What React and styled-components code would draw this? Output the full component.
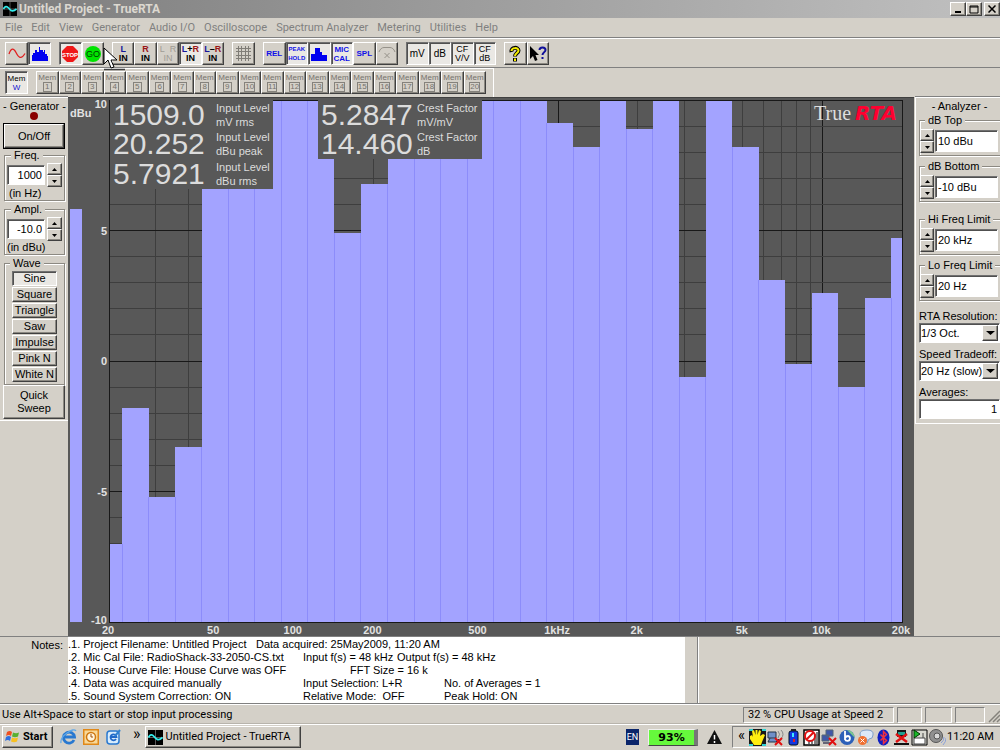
import React from "react";
import styled, { createGlobalStyle, css } from "styled-components";

const face = "#d4d0c8";
const uiFont = `Roboto, "DejaVu Sans Condensed", sans-serif`;

const raised = css`
  border: 1px solid;
  border-color: #fff #404040 #404040 #fff;
  box-shadow: inset -1px -1px 0 #8c8982;
`;
const sunken = css`
  border: 1px solid;
  border-color: #707070 #fff #fff #707070;
  box-shadow: inset 1px 1px 0 #505050;
`;

const GlobalStyle = createGlobalStyle`
  * { box-sizing: border-box; }
  body {
    margin: 0;
    background: ${face};
    font-family: "Liberation Sans", Arial, sans-serif;
    font-size: 11px;
    line-height: 13px;
    color: #000;
  }
  button, input, select { font: inherit; color: inherit; border-radius: 0; margin: 0; }
`;

const Window = styled.div`
  position: relative;
  display: flex;
  flex-direction: column;
  min-height: 100vh;
  overflow: hidden;
`;

const TitleBar = styled.header`
  display: flex;
  align-items: center;
  height: 18px;
  padding: 0 0 0 3px;
  gap: 2px;
  background: linear-gradient(90deg, #7d7d7d, #c0c0c0);
  h1 {
    flex: 1;
    margin: 0;
    font: bold 12px/16px ${uiFont};
    color: #dcd8d0;
  }
`;

const CaptionButton = styled.button`
  ${raised}
  width: 16px;
  height: 14px;
  padding: 0;
  background: ${face};
  display: flex;
  justify-content: center;
  align-items: center;
  margin-left: ${(p) => (p.$apart ? "0" : "-2px")};
`;

const MenuBar = styled.nav`
  display: flex;
  gap: 9px;
  height: 20px;
  padding: 0 5px;
  border-bottom: 1px solid #808080;
  button {
    padding: 0;
    border: 0;
    background: none;
    font: 11px/18px ${uiFont};
    color: #808080;
  }
`;

const ToolBar = styled.div`
  display: flex;
  gap: 8px;
  height: 30px;
  padding: 3px 5px;
  border-top: 1px solid #fff;
  border-bottom: 1px solid #808080;
`;

const MemBar = styled(ToolBar)`
  width: 494px;
  height: 29px;
  padding: 2px 5px 3px;
  border-bottom: 0;
  border-right: 1px solid #fff;
`;

const Group = styled.div`
  display: grid;
  grid-auto-flow: column;
  grid-auto-columns: 1fr;
  width: ${(p) => p.$w}px;
`;

const ToolButton = styled.button`
  ${(p) => (p.$on ? sunken : raised)}
  min-width: 0;
  height: 23px;
  padding: 0;
  background: ${(p) => (p.$on ? "#eae8e4" : face)};
  color: ${(p) => p.$ink || "#000"};
  display: flex;
  flex-direction: column;
  align-items: center;
  justify-content: center;
  font-size: ${(p) => p.$size || 9}px;
  font-weight: ${(p) => (p.$light ? 400 : 700)};
  line-height: 9px;
  white-space: nowrap;
`;

const Ink = styled.span`
  color: ${(p) => p.$c};
`;

const MemButton = styled(ToolButton)`
  font: 8px/9px "Liberation Sans", sans-serif;
  color: #75726c;
  b {
    min-width: 9px;
    border: 1px solid #85827c;
    font: 8px/8px "Liberation Sans", sans-serif;
    text-align: center;
  }
`;

const Main = styled.main`
  display: grid;
  grid-template-columns: 68px minmax(0, 1fr) 86px;
`;

const SidePanel = styled.aside`
  display: flex;
  flex-direction: column;
  align-items: stretch;
  align-self: start;
  padding: ${(p) => (p.$right ? "2px 0 4px 3px" : "2px 3px 1px 3px")};
  border-top: 1px solid #fff;
  border-bottom: 1px solid #fff;
  box-shadow: 0 -1px 0 #808080;
  ${(p) => p.$right && "border-left: 1px solid #fff; margin-left: 1px;"}
`;

const PanelTitle = styled.h2`
  margin: 0;
  font-size: 11px;
  font-weight: 400;
  line-height: 12px;
  text-align: center;
  white-space: nowrap;
`;

const Lamp = styled.span`
  width: 8px;
  height: 8px;
  margin: 0 auto 3px;
  border-radius: 50%;
  background: #8a0000;
`;

const PushButton = styled.button`
  ${(p) => (p.$on ? sunken : raised)}
  padding: 0;
  height: ${(p) => p.$h}px;
  background: ${(p) => (p.$on ? "#eae8e4" : face)};
  line-height: 13px;
  ${(p) => p.$main && "outline: 1px solid #000; outline-offset: 0; margin: 1px 1px 1px;"}
`;

const Box = styled.fieldset`
  min-width: 0;
  margin: ${(p) => p.$mt || 0}px 0 0 ${(p) => (p.$right ? 0 : 1)}px;
  padding: ${(p) => p.$pad || "2px 2px 1px"};
  border: 1px solid #8c8982;
  ${(p) => p.$right && "border-right: 0;"}
  box-shadow: 1px 1px 0 #fff, inset 1px 1px 0 #fff;
  legend {
    margin-left: ${(p) => (p.$right ? 5 : 4)}px;
    padding: 0 3px;
    line-height: 12px;
    height: 12px;
    background: ${face};
  }
  small {
    display: block;
    font-size: 11px;
    line-height: 12px;
    padding-left: ${(p) => p.$unit || 0}px;
  }
`;

const SpinRow = styled.div`
  display: flex;
  align-items: center;
  gap: ${(p) => (p.$right ? 1 : 2)}px;
  height: 24px;
`;

const Field = styled.input`
  ${sunken}
  flex: ${(p) => (p.$solo ? "none" : 1)};
  min-width: 0;
  width: 100%;
  height: ${(p) => p.$h || 20}px;
  padding: 0 2px;
  background: #fff;
  text-align: ${(p) => p.$align || "left"};
  outline: none;
`;

const Arrows = styled.span`
  display: flex;
  flex-direction: column;
  width: ${(p) => p.$w || 15}px;
  button {
    ${raised}
    height: 12px;
    padding: 0;
    background: ${face};
    display: flex;
    align-items: center;
    justify-content: center;
  }
`;

const WaveList = styled.div`
  display: flex;
  flex-direction: column;
  gap: 1px;
  padding: 0 6px;
`;

const Labelled = styled.label`
  display: flex;
  flex-direction: column;
  margin-top: ${(p) => p.$mt || 5}px;
  line-height: 13px;
  white-space: nowrap;
`;

const SelectBox = styled.span`
  ${sunken}
  display: grid;
  grid-template-columns: 1fr 16px;
  height: 20px;
  padding: 1px;
  background: #fff;
  select {
    grid-area: 1 / 1 / 2 / 3;
    appearance: none;
    min-width: 0;
    padding: 0;
    border: 0;
    background: none;
    outline: none;
  }
  i {
    ${raised}
    grid-area: 1 / 2;
    display: flex;
    align-items: center;
    justify-content: center;
    background: ${face};
    pointer-events: none;
  }
`;

const ChartArea = styled.section`
  position: relative;
  background: #585858;
  border-top: 1px solid #404040;
  svg {
    display: block;
    width: 100%;
    height: auto;
  }
`;

// readouts float over the plot
const Readout = styled.div`
  position: absolute;
  top: 2px;
  left: ${(p) => p.$x}px;
  width: ${(p) => p.$w}px;
  padding: 0 0 0 3px;
  background: #585858;
  color: #dcdcdc;
`;

const Reading = styled.div`
  display: flex;
  align-items: center;
  height: ${(p) => p.$h}px;
  white-space: nowrap;
  strong {
    flex: none;
    width: ${(p) => p.$col}px;
    font-size: 30px;
    line-height: 28px;
    font-weight: 400;
  }
  span {
    font-size: 11px;
    line-height: 14px;
  }
`;

const Notes = styled.section`
  display: flex;
  height: 68px;
  border-top: 1px solid #808080;
  border-bottom: 1px solid #808080;
  > h3 {
    width: 68px;
    margin: 0;
    padding: 2px 5px 0 0;
    font-size: 11px;
    font-weight: 400;
    text-align: right;
  }
  > hr {
    width: 2px;
    margin: 0 0 0 12px;
    border: 0;
    border-left: 1px solid #808080;
    border-right: 1px solid #fff;
  }
`;

const NotesText = styled.div`
  width: 617px;
  padding: 1px 0 0;
  background: #fff;
  p {
    display: flex;
    margin: 0;
    line-height: 13px;
    white-space: pre;
  }
`;

const NoteCell = styled.span`
  flex: 0 0 ${(p) => p.$w}px;
`;

const StatusBar = styled.footer`
  display: flex;
  align-items: center;
  gap: 3px;
  height: 20px;
  padding: 0 0 0 2px;
  border-top: 1px solid #fff;
  font: 11px/14px ${uiFont};
  p {
    flex: 1;
    margin: 0;
  }
`;

const StatusCell = styled.span`
  width: ${(p) => p.$w}px;
  height: 16px;
  padding-left: 4px;
  border: 1px solid;
  border-color: #808080 #fff #fff #808080;
  line-height: 14px;
  white-space: nowrap;
`;

const TaskBar = styled.div`
  display: flex;
  align-items: center;
  height: 25px;
  padding-left: 2px;
  border-top: 1px solid #fff;
  box-shadow: 0 -1px 0 #b8b4ac;
  font: 11px/14px ${uiFont};
`;

const TaskButton = styled.button`
  ${raised}
  display: flex;
  align-items: center;
  gap: 3px;
  width: ${(p) => p.$w}px;
  height: 22px;
  padding: 0 2px;
  background: ${face};
  font-weight: ${(p) => (p.$bold ? 700 : 400)};
  white-space: nowrap;
`;

const QuickLaunch = styled.div`
  display: flex;
  align-items: center;
  gap: 6px;
  padding: 0 3px 0 7px;
  span {
    font-size: 16px;
    line-height: 12px;
    height: 18px;
    padding: 0 1px 0 5px;
  }
`;

const Indicators = styled.div`
  display: flex;
  align-items: center;
  gap: 9px;
  margin-left: auto;
  margin-right: 10px;
`;

const Language = styled.span`
  width: 13px;
  height: 16px;
  background: #0a246a;
  color: #fff;
  font-size: 9px;
  line-height: 16px;
  text-align: center;
`;

const Battery = styled.span`
  width: 50px;
  height: 17px;
  border: 1px solid #eee;
  border-bottom-color: #444;
  border-right: 4px solid #777;
  background: #66f83c;
  font: bold 11px/15px "DejaVu Sans", sans-serif;
  text-align: center;
`;

const Tray = styled.div`
  display: flex;
  align-items: center;
  gap: 1px;
  width: 268px;
  height: 22px;
  padding: 0 7px 0 5px;
  border: 1px solid;
  border-color: #808080 #fff #fff #808080;
  border-right: 0;
  svg { flex: none; }
  time { margin-left: auto; white-space: nowrap; }
  span { font-size: 15px; line-height: 12px; height: 16px; margin-right: 3px; }
`;

// pointer drawn above the toolbars
const Pointer = styled.svg`
  position: absolute;
  left: 103px;
  top: 47px;
  pointer-events: none;
`;

const menus = ["File", "Edit", "View", "Generator", "Audio I/O", "Oscilloscope", "Spectrum Analyzer", "Metering", "Utilities", "Help"];
const waves = ["Sine", "Square", "Triangle", "Saw", "Impulse", "Pink N", "White N"];

const AppIcon = ({ size = 15 }) => (
  <svg width={size} height={size} viewBox="0 0 15 15">
    <rect width="15" height="15" fill="#000" />
    <path d="M7.5 0v15M0 7.5h15" stroke="#707070" strokeWidth="0.8" />
    <path d="M0.5 7.5C2 4.500 4 4 6 6.500S10 11.500 14.500 7.500" fill="none" stroke="#3ee" strokeWidth="1.8" />
  </svg>
);

const Tri = ({ up, w = 5 }) => (
  <svg width={w} height={w === 5 ? 3 : 4} viewBox="0 0 6 3" preserveAspectRatio="none">
    <path d={up ? "M0 3L3 0L6 3Z" : "M0 0L3 3L6 0Z"} />
  </svg>
);

function Spin({ label, w }) {
  return (
    <Arrows $w={w}>
      <button aria-label={`${label} up`}><Tri up /></button>
      <button aria-label={`${label} down`}><Tri /></button>
    </Arrows>
  );
}

function Tools() {
  return (
    <ToolBar>
      <Group $w={46}>
        <ToolButton aria-label="Oscilloscope">
          <svg width="18" height="16" viewBox="0 0 18 16">
            <path d="M1 8C3 2 5.500 1.500 8 6.500S13 14 17 7.500" fill="none" stroke="#e02020" strokeWidth="1.300" />
          </svg>
        </ToolButton>
        <ToolButton $on aria-label="Spectrum">
          <svg width="18" height="16" viewBox="0 0 18 16">
            <path d="M1 15V9h1V7h2V4h2v2h2V1h1v3h3v2h1V4h1v4h2v2h1v5Z" fill="#0000f0" />
          </svg>
        </ToolButton>
      </Group>
      <Group $w={45}>
        <ToolButton $on aria-label="Stop">
          <svg width="18" height="18" viewBox="0 0 18 18">
            <path d="M6 1h6l5 5v6l-5 5H6l-5-5V6Z" fill="#f01818" />
            <text x="9" y="12" fill="#fff" fontSize="6" fontWeight="700" textAnchor="middle">STOP</text>
          </svg>
        </ToolButton>
        <ToolButton aria-label="Go">
          <svg width="18" height="18" viewBox="0 0 18 18">
            <circle cx="9" cy="9" r="8" fill="#00e400" />
            <text x="9" y="12" fill="#003c00" fontSize="9" fontWeight="400" textAnchor="middle">GO</text>
          </svg>
        </ToolButton>
      </Group>
      <Group $w={112}>
        <ToolButton><Ink $c="#16169a">L</Ink><span>IN</span></ToolButton>
        <ToolButton><Ink $c="#9a1616">R</Ink><span>IN</span></ToolButton>
        <ToolButton $ink="#a09c94" $light><span>L&nbsp;&nbsp;R</span><span>IN</span></ToolButton>
        <ToolButton $on><span><Ink $c="#16169a">L</Ink>+<Ink $c="#9a1616">R</Ink></span><span>IN</span></ToolButton>
        <ToolButton><span><Ink $c="#16169a">L</Ink>–<Ink $c="#9a1616">R</Ink></span><span>IN</span></ToolButton>
      </Group>
      <Group $w={23}>
        <ToolButton aria-label="Grid">
          <svg width="17" height="17" viewBox="0 0 17 17">
            <path d="M3.500 1v15M6.500 1v15M10.500 1v15M13.500 1v15M1 3.500h15M1 6.500h15M1 10.500h15M1 13.500h15" stroke="#807d77" />
          </svg>
        </ToolButton>
      </Group>
      <Group $w={135}>
        <ToolButton $ink="#1010e8" $size={8}>REL</ToolButton>
        <ToolButton $on $ink="#1010e8" $size={6}><span>PEAK</span><span>HOLD</span></ToolButton>
        <ToolButton $on aria-label="Bars">
          <svg width="18" height="16" viewBox="0 0 18 16">
            <path d="M1 15V8h4V2h5v4h2v3h5v6Z" fill="#0000f0" />
          </svg>
        </ToolButton>
        <ToolButton $on $ink="#1010e8" $size={8}><span>MIC</span><span>CAL</span></ToolButton>
        <ToolButton $ink="#1010e8" $size={8}>SPL</ToolButton>
        <ToolButton aria-label="Clear curve">
          <svg width="18" height="16" viewBox="0 0 18 16" fill="none" stroke="#96928a">
            <path d="M1 6C2 3 4 1.500 6 1.500h6c2 0 4 1.500 5 4.500M6.500 7l5 5M11.500 7l-5 5" />
          </svg>
        </ToolButton>
      </Group>
      <Group $w={90}>
        <ToolButton $on $light $size={10}>mV</ToolButton>
        <ToolButton $on $light $size={10}>dB</ToolButton>
        <ToolButton $on $light><span>CF</span><span>V/V</span></ToolButton>
        <ToolButton $on $light><span>CF</span><span>dB</span></ToolButton>
      </Group>
      <Group $w={45}>
        <ToolButton aria-label="Help">
          <svg width="14" height="18" viewBox="0 0 14 18">
            <g fill="none" strokeLinejoin="round">
              <path d="M3.500 7C2.500 2 10.500 1.500 10.500 5.500C10.500 8 7 8 7 11.500M7 13v3.500" stroke="#000" strokeWidth="4" />
              <path d="M3.500 6C3.500 2.500 10.500 2 10.500 5.500C10.500 8 7 8 7 11M7 13.500v2.500" stroke="#f4ec00" strokeWidth="2" />
            </g>
          </svg>
        </ToolButton>
        <ToolButton aria-label="Context help">
          <svg width="18" height="18" viewBox="0 0 18 18">
            <path d="M1 1v13l3-3 2 5 2.500-1-2-5H10Z" fill="#000" />
            <path d="M10.500 5C10.500 1.500 16.500 1.500 16.500 5C16.500 7.500 13.500 7 13.500 10M13.500 12v2" fill="none" stroke="#10109a" strokeWidth="2" />
          </svg>
        </ToolButton>
      </Group>
    </ToolBar>
  );
}

const X0 = 41;
const X1 = 834;
const Y0 = 2;
const Y1 = 524;
const fx = (f) => X0 + (Math.log10(f / 20) / 3) * (X1 - X0);
const dy = (db) => Y0 + ((10 - db) / 20) * (Y1 - Y0);

// third octave bands, level in dBu
const levels = [
  -7, -1.8, -5.2, -3.3, 10, 10, 10, 10, 10, 4.9, 6.8, 10, 10, 10, 10, 10, 10, 9.1, 8.2, 10, 8.9,
  10, -0.6, 10, 8.2, 3.1, -0.1, 2.6, -1, 2.4, 4.7,
];
const bandEdge = (i) => Math.min(X1, Math.max(X0, fx(20 * 2 ** ((i - 0.5) / 3))));
const decade = [2, 3, 4, 5, 6, 7, 8, 9, 10];
const gridFreqs = [...decade.slice(1).map((n) => n * 10), ...decade.map((n) => n * 100), ...decade.map((n) => n * 1000)];
const xLabels = [[20, "20"], [50, "50"], [100, "100"], [200, "200"], [500, "500"], [1000, "1kHz"], [2000, "2k"], [5000, "5k"], [10000, "10k"], [20000, "20k"]];

function Chart() {
  return (
    <svg viewBox="0 0 846 538" fontFamily="Liberation Sans, sans-serif">
      <g shapeRendering="crispEdges">
        {gridFreqs.map((f) => (
          <line key={f} x1={fx(f)} x2={fx(f)} y1={Y0} y2={Y1} stroke={[100, 1000, 10000].includes(f) ? "#181818" : "#3e3e3e"} />
        ))}
        {Array.from({ length: 19 }, (_, i) => 9 - i).map((d) => (
          <line key={d} x1={X0} x2={X1} y1={dy(d)} y2={dy(d)} stroke={d % 5 ? "#3e3e3e" : "#181818"} />
        ))}
        {levels.map((l, i) => (
          <g key={i}>
            <rect x={bandEdge(i)} y={dy(l)} width={bandEdge(i + 1) - bandEdge(i)} height={Y1 - dy(l)} fill="#a3a3ff" />
            {i > 0 && <line x1={bandEdge(i)} x2={bandEdge(i)} y1={dy(Math.min(l, levels[i - 1]))} y2={Y1} stroke="#8c8cfa" />}
          </g>
        ))}
        <rect x={X0} y={Y0} width={X1 - X0} height={Y1 - Y0} fill="none" stroke="#181818" />
        <rect x="2" y="111" width="12" height={Y1 - 111} fill="#a3a3ff" />
      </g>
      <g fill="#e2e2e2" fontSize="11" fontWeight="700">
        <text x="2" y="19">dBu</text>
        {[10, 5, 0, -5, -10].map((d) => (
          <text key={d} x="39" y={dy(d) + (d === 10 ? 8 : d === -10 ? 2 : 4)} textAnchor="end">{d}</text>
        ))}
        {xLabels.map(([f, t]) => (
          <text key={t} x={fx(f) - 1} y="536" textAnchor="middle">{t}</text>
        ))}
      </g>
      <text x="746" y="22" fill="#dedede" fontSize="20" fontFamily="Liberation Serif, serif">True</text>
      <text x="787" y="22" fill="#ff0030" fontSize="20" fontWeight="700" fontStyle="italic" fontFamily="DejaVu Sans, sans-serif">RTA</text>
    </svg>
  );
}

function Generator() {
  return (
    <SidePanel>
      <PanelTitle>- Generator -</PanelTitle>
      <Lamp />
      <PushButton $h={24} $main>On/Off</PushButton>
      <Box $unit={2}>
        <legend>Freq.</legend>
        <SpinRow>
          <Field aria-label="Frequency in Hz" $align="right" defaultValue="1000" />
          <Spin label="Frequency" />
        </SpinRow>
        <small>(in Hz)</small>
      </Box>
      <Box $mt={2}>
        <legend>Ampl.</legend>
        <SpinRow>
          <Field aria-label="Amplitude in dBu" $align="right" defaultValue="-10.0" />
          <Spin label="Amplitude" />
        </SpinRow>
        <small>(in dBu)</small>
      </Box>
      <Box $mt={2} $pad="2px 1px 2px">
        <legend>Wave</legend>
        <WaveList>
          {waves.map((w, i) => <PushButton key={w} $h={15} $on={i === 0}>{w}</PushButton>)}
        </WaveList>
      </Box>
      <PushButton $h={34}>Quick<br />Sweep</PushButton>
    </SidePanel>
  );
}

function Limit({ name, value, mt }) {
  return (
    <Box $right $mt={mt} $pad="3px 2px 2px 0">
      <legend>{name}</legend>
      <SpinRow $right>
        <Spin label={name} w={14} />
        <Field $h={22} aria-label={name} defaultValue={value} />
      </SpinRow>
    </Box>
  );
}

function Analyzer() {
  return (
    <SidePanel $right>
      <PanelTitle>- Analyzer -</PanelTitle>
      <Limit name="dB Top" value="10 dBu" mt={2} />
      <Limit name="dB Bottom" value="-10 dBu" mt={4} />
      <Limit name="Hi Freq Limit" value="20 kHz" mt={11} />
      <Limit name="Lo Freq Limit" value="20 Hz" mt={4} />
      <Labelled $mt={9}>
        RTA Resolution:
        <SelectBox><select defaultValue="a"><option value="a">1/3 Oct.</option></select><i><Tri w={9} /></i></SelectBox>
      </Labelled>
      <Labelled>
        Speed Tradeoff:
        <SelectBox><select defaultValue="a"><option value="a">20 Hz (slow)</option></select><i><Tri w={9} /></i></SelectBox>
      </Labelled>
      <Labelled>
        Averages:
        <Field $solo $align="right" defaultValue="1" />
      </Labelled>
    </SidePanel>
  );
}

const notes = [
  [[188, ".1. Project Filename: Untitled Project"], [240, "Data acquired: 25May2009, 11:20 AM"]],
  [[235, ".2. Mic Cal File: RadioShack-33-2050-CS.txt"], [94, "Input f(s) = 48 kHz"], [120, "Output f(s) = 48 kHz"]],
  [[282, ".3. House Curve File: House Curve was OFF"], [100, "FFT Size = 16 k"]],
  [[235, ".4. Data was acquired manually"], [141, "Input Selection: L+R"], [120, "No. of Averages = 1"]],
  [[235, ".5. Sound System Correction: ON"], [141, "Relative Mode:  OFF"], [120, "Peak Hold: ON"]],
];

function TrayIcons() {
  return (
    <>
      <svg width="17" height="17" viewBox="0 0 17 17">
        <path d="M0 0h17v17H0Z" fill="#181818" />
        <path d="M0 1h4M13 1h4M0 16h4M13 16h4" stroke="#30d0d0" strokeWidth="2" />
        <path d="M5 16L1 10V7l2-1 1 2-1-6 2-1 1.500 5V1h2v5L10 1l2 1-1 5 3-2 2 1-3 7-1 3Z" fill="#ffee10" />
      </svg>
      <svg width="17" height="17" viewBox="0 0 17 17">
        <path d="M1 3h8v6H1ZM3 9l-2 4h8l3-3" fill="#6f8fc8" stroke="#234" />
        <path d="M11 2q3 3 0 7M14 1q4 4 0 9" fill="none" stroke="#888" />
        <path d="M8 9l7 7M15 9l-7 7" stroke="#e01010" strokeWidth="2" />
      </svg>
      <svg width="17" height="17" viewBox="0 0 17 17">
        <rect x="4" y="2" width="9" height="14" rx="2" fill="#1438e0" stroke="#012" />
        <path d="M6 1h5" stroke="#222" strokeWidth="2" />
        <path d="M8 4v4" stroke="#40e8ff" strokeWidth="2" /><path d="M9 10v3" stroke="#e02020" strokeWidth="2" />
      </svg>
      <svg width="17" height="17" viewBox="0 0 17 17">
        <path d="M1 1h15v15H1Z" fill="#fff" stroke="#000" strokeWidth="1.500" />
        <path d="M12 5v10M14 3v12M9 11v4M6 12v3" stroke="#000" />
        <circle cx="7" cy="7" r="5" fill="#fff" stroke="#e01010" strokeWidth="2" /><path d="M3.500 10.500l7-7" stroke="#e01010" strokeWidth="2" />
      </svg>
      <svg width="17" height="17" viewBox="0 0 17 17">
        <path d="M5 1h7v6H5ZM1 6h7v6H1Z" fill="#4058a8" stroke="#567" />
        <path d="M2 14h8" stroke="#667" strokeWidth="2" />
        <path d="M8 9l7 7M15 9l-7 7" stroke="#e01010" strokeWidth="2" />
      </svg>
      <svg width="17" height="17" viewBox="0 0 17 17">
        <circle cx="8" cy="8.500" r="7.500" fill="#2c60b8" /><path d="M8 1a7.500 7.500 0 0 1 7.500 7.500Z" fill="#7cc88c" />
        <path d="M6 2v9M6 10a2.500 2.500 0 1 0 3-3q-2 0-3 2" fill="none" stroke="#fff" strokeWidth="1.800" />
      </svg>
      <svg width="17" height="17" viewBox="0 0 17 17">
        <path d="M3 5q0-4 7-4t6 5q0 4-4 4l-2 4V10Q3 10 3 5Z" fill="#dce8f8" stroke="#7f9fc8" />
        <circle cx="5.500" cy="11.500" r="4.500" fill="#f07030" /><path d="M3.500 9.500l4 4M7.500 9.500l-4 4" stroke="#fff" />
      </svg>
      <svg width="17" height="17" viewBox="0 0 17 17">
        <ellipse cx="8.500" cy="8.500" rx="6" ry="8" fill="#1020c0" />
        <path d="M5.500 5.500l6 6-3 3v-12l3 3-6 6" fill="none" stroke="#f03040" strokeWidth="1.500" />
      </svg>
      <svg width="17" height="17" viewBox="0 0 17 17">
        <path d="M4 1h9v7H4Z" fill="#181818" /><path d="M5 3h7v3H5Z" fill="#20a090" /><path d="M1 15h15" stroke="#111" strokeWidth="2" />
        <path d="M3 5l11 8M14 5L3 13" stroke="#e01010" strokeWidth="2.500" />
      </svg>
      <svg width="17" height="17" viewBox="0 0 17 17">
        <path d="M1 1h15v15H1Z" fill="#d8d8d0" stroke="#000" /><path d="M3 9h11v6H3ZM12 9V4" fill="#fff" stroke="#444" />
        <path d="M3 1v8l6-4Z" fill="#18b828" stroke="#030" />
      </svg>
      <svg width="17" height="17" viewBox="0 0 17 17">
        <circle cx="7" cy="7" r="6.500" fill="#909090" stroke="#555" /><circle cx="8" cy="7" r="3" fill="#d8d8d8" stroke="#555" />
        <path d="M12 14q3-2 3-6M14 16q3-3 3-7" fill="none" stroke="#8aa0d8" />
      </svg>
    </>
  );
}

export default function App() {
  return (
    <Window>
      <GlobalStyle />
      <TitleBar>
        <AppIcon size={14} />
        <h1>Untitled Project - TrueRTA</h1>
        <CaptionButton aria-label="Minimize"><svg width="8" height="8"><path d="M1 7h6" stroke="#000" strokeWidth="2" /></svg></CaptionButton>
        <CaptionButton aria-label="Maximize"><svg width="10" height="9"><path d="M1 1h8v7H1ZM1 2h8" fill="none" stroke="#000" /></svg></CaptionButton>
        <CaptionButton $apart aria-label="Close"><svg width="8" height="8"><path d="M0.500 0.500l7 7M7.500 0.500l-7 7" stroke="#000" strokeWidth="1.500" /></svg></CaptionButton>
      </TitleBar>
      <MenuBar>
        {menus.map((m) => <button key={m}>{m}</button>)}
      </MenuBar>
      <Tools />
      <MemBar>
        <Group $w={23}>
          <ToolButton $on $light $size={8}><span>Mem</span><Ink $c="#1010d0">W</Ink></ToolButton>
        </Group>
        <Group $w={450}>
          {Array.from({ length: 20 }, (_, i) => (
            <MemButton key={i}><span>Mem</span><b>{i + 1}</b></MemButton>
          ))}
        </Group>
      </MemBar>
      <Main>
        <Generator />
        <ChartArea>
          <Chart />
          <Readout $x={42} $w={163}>
            <Reading $h={29} $col={103}><strong>1509.0</strong><span>Input Level<br />mV rms</span></Reading>
            <Reading $h={30} $col={103}><strong>20.252</strong><span>Input Level<br />dBu peak</span></Reading>
            <Reading $h={30} $col={103}><strong>5.7921</strong><span>Input Level<br />dBu rms</span></Reading>
          </Readout>
          <Readout $x={250} $w={164}>
            <Reading $h={29} $col={96}><strong>5.2847</strong><span>Crest Factor<br />mV/mV</span></Reading>
            <Reading $h={30} $col={96}><strong>14.460</strong><span>Crest Factor<br />dB</span></Reading>
          </Readout>
        </ChartArea>
        <Analyzer />
      </Main>
      <Notes>
        <h3>Notes:</h3>
        <NotesText>
          {notes.map((row, i) => (
            <p key={i}>{row.map(([w, t]) => <NoteCell key={t} $w={w}>{t}</NoteCell>)}</p>
          ))}
        </NotesText>
        <hr />
      </Notes>
      <StatusBar>
        <p>Use Alt+Space to start or stop input processing</p>
        <StatusCell $w={151}>32 % CPU Usage at Speed 2</StatusCell>
        <StatusCell $w={25} />
        <StatusCell $w={27} />
        <StatusCell $w={30} />
        <svg width="12" height="16" viewBox="0 0 12 16">
          <path d="M1 15L12 4M5 15l7-7M9 15l3-3" stroke="#85827c" strokeWidth="1.500" />
        </svg>
      </StatusBar>
      <TaskBar>
        <TaskButton $w={51} $bold>
          <svg width="15" height="14" viewBox="0 0 15 14">
            <path d="M2 2q3-2 5 0l-1 4q-2-2-5 0Z" fill="#f05020" /><path d="M8 2.500q3 1.500 6 0l-1 4q-3 1.500-6 0Z" fill="#58b030" />
            <path d="M1 7q3-2 5 0l-1 4q-2-2-5 0Z" fill="#3070e0" /><path d="M7 7.500q3 1.500 6 0l-1 4q-3 1.500-6 0Z" fill="#f8c020" />
          </svg>
          Start
        </TaskButton>
        <QuickLaunch>
          <svg width="17" height="17" viewBox="0 0 17 17">
            <path d="M14 11a5.500 5.500 0 1 1 .5-3H5" fill="none" stroke="#2878d0" strokeWidth="2.800" />
            <path d="M1 14Q0 9 7 4T16 2" fill="none" stroke="#60a8e8" strokeWidth="1.300" />
          </svg>
          <svg width="16" height="16" viewBox="0 0 16 16">
            <rect x="0.500" y="0.500" width="15" height="15" fill="#f8d898" stroke="#e08818" strokeWidth="2" />
            <circle cx="8" cy="8" r="4.500" fill="#fff4dc" stroke="#d07810" strokeWidth="1.500" /><path d="M8 5v3h2" fill="none" stroke="#a05008" />
          </svg>
          <svg width="17" height="17" viewBox="0 0 17 17">
            <rect x="2" y="2" width="12" height="13" rx="3" fill="#d8ecfc" stroke="#2878d0" strokeWidth="1.500" />
            <path d="M11 10a3 3 0 1 1 .5-2H6" fill="none" stroke="#2068c8" strokeWidth="1.800" /><path d="M10 7l5-6" stroke="#3080d0" strokeWidth="2" />
          </svg>
          <span>»</span>
        </QuickLaunch>
        <TaskButton $w={156}><AppIcon /> Untitled Project - TrueRTA</TaskButton>
        <Indicators>
          <Language>EN</Language>
          <Battery>93%</Battery>
          <svg width="15" height="15" viewBox="0 0 15 15"><path d="M7.500 0L15 14H0Z" fill="#111" /><path d="M7.500 5v4.500M7.500 11v2" stroke="#fff" strokeWidth="1.500" /></svg>
        </Indicators>
        <Tray>
          <span>«</span>
          <TrayIcons />
          <time>11:20 AM</time>
        </Tray>
      </TaskBar>
      <Pointer width="24" height="24" viewBox="0 0 24 24">
        <path d="M1 1v16l4-4 3 8 3-1-3-7h6Z" fill="#fff" stroke="#000" />
        <path d="M1 22.500h21" stroke="#404040" strokeWidth="1.500" />
      </Pointer>
    </Window>
  );
}
